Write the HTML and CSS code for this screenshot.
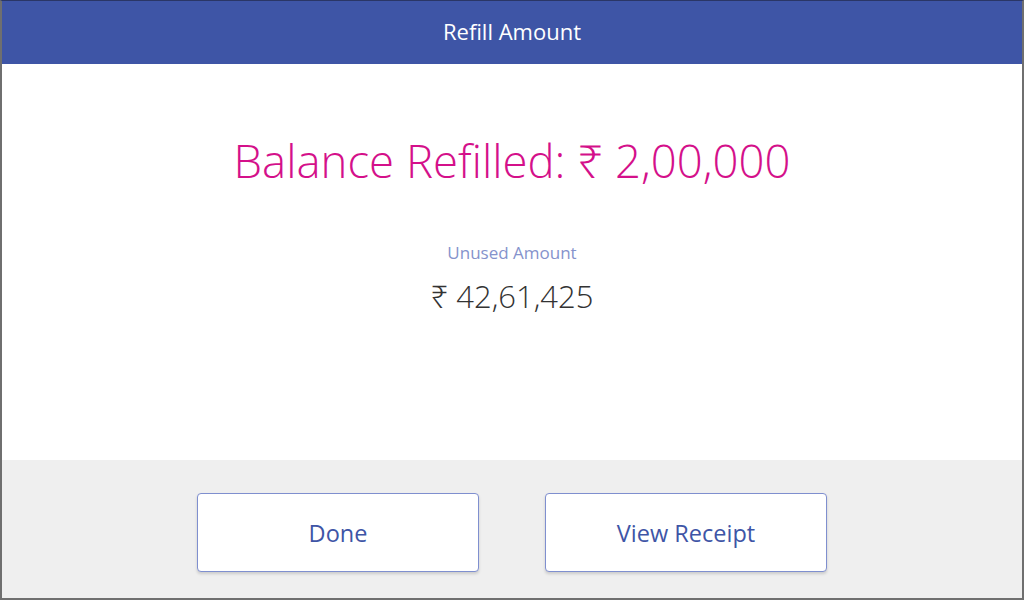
FILE: index.html
```html
<!DOCTYPE html>
<html lang="en">
<head>
    <meta charset="UTF-8">
    <meta name="viewport" content="width=device-width, initial-scale=1.0">
    <title>Refill Amount</title>
    <link rel="stylesheet" href="styles.css">
</head>
<body>
    <div class="screen">
        <header class="top-bar">Refill Amount</header>
        <main class="content">
            <h1 class="refilled">Balance Refilled: ₹ 2,00,000</h1>
            <p class="label">Unused Amount</p>
            <p class="amount">₹ 42,61,425</p>
        </main>
        <footer class="actions">
            <button class="action">Done</button>
            <button class="action">View Receipt</button>
        </footer>
    </div>
</body>
</html>
```

FILE: styles.css
```css
html, body {
    margin: 0;
    padding: 0;
}
body {
    font-family: "Open Sans", "Noto Sans", sans-serif;
    background: #ffffff;
}
.screen {
    width: 1024px;
    height: 600px;
    box-sizing: border-box;
    border: 2px solid #6f6f6f;
    border-top: 1px solid #2a3666;
    display: flex;
    flex-direction: column;
}
.top-bar {
    height: 63px;
    padding-bottom: 4px;
    box-sizing: border-box;
    background: #3e55a6;
    color: #ffffff;
    font-size: 22px;
    font-weight: 500;
    display: flex;
    align-items: center;
    justify-content: center;
}
.content {
    flex: 1;
    text-align: center;
    padding-top: 66px;
}
.refilled {
    margin: 0;
    font-size: 45.5px;
    font-weight: 300;
    line-height: 60px;
    color: #d4108a;
}
.label {
    margin: 52px 0 0;
    font-size: 17px;
    line-height: 22px;
    color: #8593cc;
}
.amount {
    margin: 13px 0 0;
    font-size: 31px;
    font-weight: 300;
    line-height: 38px;
    color: #333333;
}
.actions {
    height: 138px;
    box-sizing: border-box;
    padding-top: 33px;
    background: #efefef;
    display: flex;
    align-items: flex-start;
    justify-content: center;
    gap: 66px;
}
.action {
    width: 282px;
    height: 79px;
    background: #ffffff;
    border: 1px solid #7f8fcf;
    border-radius: 4px;
    box-shadow: 0 2px 3px rgba(0, 0, 0, 0.15);
    font-family: "Open Sans", "Noto Sans", sans-serif;
    font-size: 23.5px;
    color: #3e55a6;
    cursor: pointer;
}
```
